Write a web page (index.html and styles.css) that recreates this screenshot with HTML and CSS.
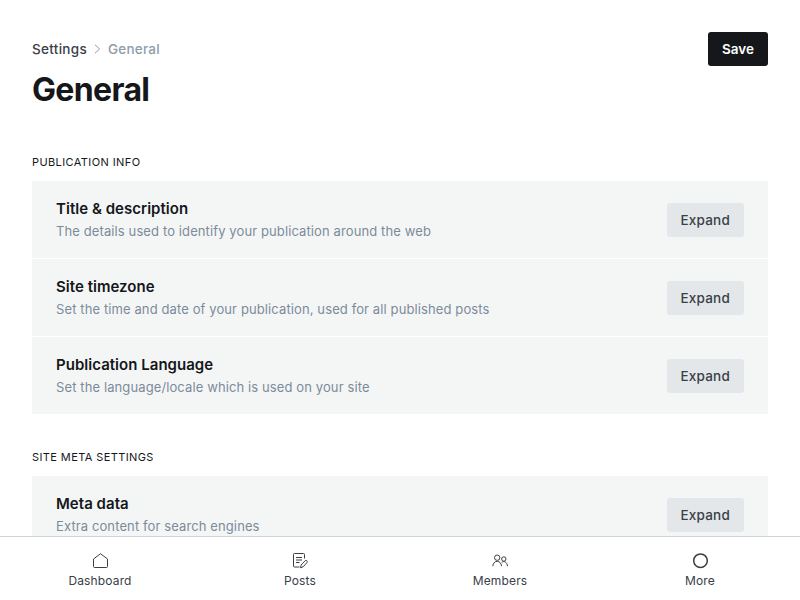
FILE: index.html
```html
<!DOCTYPE html>
<html lang="en">
<head>
<meta charset="utf-8">
<title>Settings - General</title>
<link rel="stylesheet" href="styles.css">
</head>
<body>
<main class="content">
  <header class="page-header">
    <div>
      <nav class="breadcrumb"><a>Settings</a><svg width="7" height="10" viewBox="0 0 7 10"><path d="M1 .8 5.6 5 1 9.2"/></svg><span>General</span></nav>
      <h1>General</h1>
    </div>
    <button class="btn btn-primary">Save</button>
  </header>
  <section>
    <h2>Publication info</h2>
    <div class="group">
      <div class="row"><div><h3>Title &amp; description</h3><p>The details used to identify your publication around the web</p></div><button class="btn">Expand</button></div>
      <div class="row"><div><h3>Site timezone</h3><p>Set the time and date of your publication, used for all published posts</p></div><button class="btn">Expand</button></div>
      <div class="row"><div><h3>Publication Language</h3><p>Set the language/locale which is used on your site</p></div><button class="btn">Expand</button></div>
    </div>
  </section>
  <section>
    <h2>Site meta settings</h2>
    <div class="group">
      <div class="row"><div><h3>Meta data</h3><p>Extra content for search engines</p></div><button class="btn">Expand</button></div>
    </div>
  </section>
</main>
<nav class="mobile-nav">
  <a><svg viewBox="0 0 16 16"><path d="M1.5 6 8.5.7l7 5.3v7.5q0 1-1 1h-12q-1 0-1-1z"/></svg><span>Dashboard</span></a>
  <a><svg viewBox="0 0 16 16"><path d="M12.5 5.5v-4q0-1-1-1h-9q-1 0-1 1V13q0 1 1 1h5M4 4.5h6M4 7h6M4 9.5h3.5M8.5 14.8l.6-2.8 4.1-4.3q.8-.7 1.7.1t.1 1.7L11 13.9z"/></svg><span>Posts</span></a>
  <a><svg viewBox="0 0 16 16"><circle cx="5.2" cy="4.7" r="2.7"/><circle cx="11.8" cy="6" r="2.2"/><path d="M.8 13.2c.2-2.8 1.9-4.9 4.4-4.9s4 2 4.4 4.9M9.7 9.4c2.5-2 5.4-.2 5.8 3.8"/></svg><span>Members</span></a>
  <a><svg class="ring" viewBox="0 0 16 16"><circle cx="8.5" cy="7.7" r="6.8"/></svg><span>More</span></a>
</nav>
</body>
</html>
```
FILE: styles.css
```css
* { box-sizing: border-box; }
body { margin: 0; height: 600px; overflow: hidden; display: flex; flex-direction: column; background: #fff; color: #15171a; font-family: Inter, sans-serif; }
h1, h2, h3, p { margin: 0; }
.content { flex: 1; min-height: 0; overflow: hidden; padding: 32px 32px 0; }
.page-header { display: flex; justify-content: space-between; align-items: flex-start; height: 118px; }
.breadcrumb { display: flex; align-items: center; height: 18px; margin-top: 8px; font-size: 13.5px; letter-spacing: .3px; font-weight: 500; color: #394047; }
.breadcrumb svg { margin: 0 7px; fill: none; stroke: #8e9cac; }
.breadcrumb span { color: #8e9cac; letter-spacing: .2px; }
h1 { margin-top: 11px; font-size: 32px; line-height: 42px; font-weight: 700; letter-spacing: -.65px; }
.btn { height: 34px; padding: 0 14px; border: 0; border-radius: 3px; background: #e3e7ea; color: #394047; font: 500 13.5px/34px Inter, sans-serif; letter-spacing: .2px; }
.btn-primary { width: 60px; padding: 0; background: #15171a; color: #fff; font-weight: 600; letter-spacing: 0; }
h2 { height: 31px; font-size: 11px; line-height: 24px; font-weight: 400; letter-spacing: .4px; text-transform: uppercase; }
section { margin-bottom: 31px; }
.row { height: 77px; padding: 0 24px; display: flex; justify-content: space-between; align-items: center; background: #f4f6f6; }
.row + .row { margin-top: 1px; }
h3 { margin-top: 2px; font-size: 15px; line-height: 22px; font-weight: 600; letter-spacing: .03px; }
p { font-size: 13px; line-height: 23px; letter-spacing: .11px; color: #7c8b9a; }
.mobile-nav { height: 64px; flex: none; display: flex; border-top: 1px solid #ced4d9; background: #fff; }
.mobile-nav a { flex: 1; display: flex; flex-direction: column; align-items: center; padding-top: 16px; font-size: 12px; line-height: 16px; letter-spacing: .15px; color: #394047; }
.mobile-nav svg { width: 16px; height: 16px; margin-bottom: 4px; fill: none; stroke: #394047; }
.mobile-nav .ring { stroke-width: 1.5; }
```
